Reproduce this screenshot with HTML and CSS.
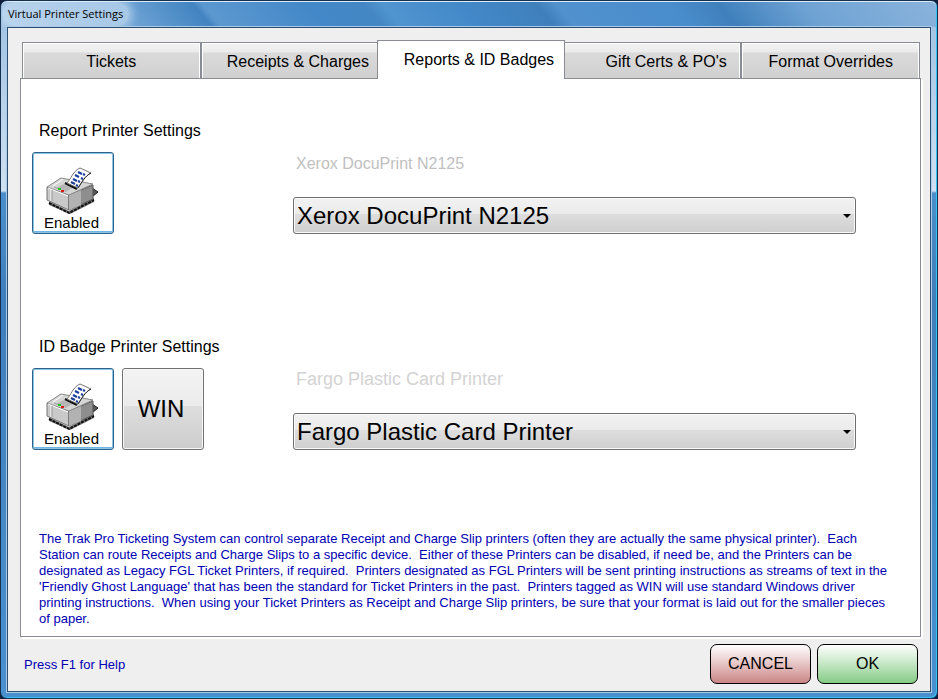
FILE: index.html
```html
<!DOCTYPE html>
<html lang="en">
<head>
<meta charset="UTF-8">
<title>Virtual Printer Settings</title>
<link rel="stylesheet" href="styles.css">
</head>
<body>
<svg width="0" height="0" class="symbols" aria-hidden="true">
  <symbol id="printer" viewBox="0 0 54 48">
    <!-- base -->
    <path d="M3 34 L23 44 L48 31 V35 L24 47 L3 38 Z" fill="#777"/>
    <path d="M3 36 L23 46 L48 33" fill="none" stroke="#111" stroke-width="2" stroke-dasharray="3 1"/>
    <path d="M46 21 L52 25 L46 30 Z" fill="#555" stroke="#222"/>
    <!-- body -->
    <path d="M1 20 L23 28 V43 L1 33 Z" fill="#c9c9c9" stroke="#777"/>
    <path d="M23 28 L47 18 V32 L23 43 Z" fill="#8e8e8e" stroke="#555"/>
    <path d="M23 28 L35 23 V38 L23 43 Z" fill="#b2b2b2"/>
    <path d="M1 20 L15 11 L47 17 L23 28 Z" fill="#d6d6d6" stroke="#888"/>
    <path d="M5 22 V34 M7 19 L17 12 M2 21 L22 29" fill="none" stroke="#fff"/>
    <path d="M6 23 V34 M8 20 L18 24" fill="none" stroke="#999"/>
    <path d="M10 21 L18 17 L28 20 L20 25 Z" fill="#b5b5b5"/>
    <path d="M19 16 L31 22" stroke="#111" stroke-width="2"/>
    <!-- paper -->
    <path d="M21 16 C25 12 27 4 34 1 L45 6 C39 9 36 15 32 21 Z" fill="#fff" stroke="#777"/>
    <path d="M45 6 C39 9 36 15 32 21" fill="none" stroke="#222"/>
    <path d="M32 5 L36 7 M37 7 L39 8 M29 8 L33 10 M35 11 L37 12 M27 12 L31 14 M32 14 L34 15 M25 15 L29 17 M30 18 L32 19" stroke="#1a3c9c" stroke-width="2"/>
    <rect x="12" y="21" width="3" height="2" fill="#18c818"/>
    <rect x="15" y="23" width="3" height="2" fill="#e01818"/>
  </symbol>
</svg>

<div class="window">
  <header class="titlebar"><span class="title">Virtual Printer Settings</span></header>

  <main class="client">
    <div class="tabs" role="tablist">
      <button class="tab" role="tab">Tickets</button>
      <button class="tab indent" role="tab">Receipts &amp; Charges</button>
      <button class="tab indent active" role="tab" aria-selected="true">Reports &amp; ID Badges</button>
      <button class="tab indent-more" role="tab">Gift Certs &amp; PO's</button>
      <button class="tab" role="tab">Format Overrides</button>
    </div>

    <div class="panel" role="tabpanel">
      <section class="settings">
        <h2>Report Printer Settings</h2>
        <div class="row">
          <div class="toggles">
            <button class="square enabled"><svg class="icon"><use href="#printer"/></svg>Enabled</button>
          </div>
          <div class="device">
            <label for="report-printer">Xerox DocuPrint N2125</label>
            <div class="combo">
              <select id="report-printer"><option>Xerox DocuPrint N2125</option></select>
            </div>
          </div>
        </div>
      </section>

      <section class="settings">
        <h2>ID Badge Printer Settings</h2>
        <div class="row">
          <div class="toggles">
            <button class="square enabled"><svg class="icon"><use href="#printer"/></svg>Enabled</button>
            <button class="square win">WIN</button>
          </div>
          <div class="device">
            <label class="large" for="badge-printer">Fargo Plastic Card Printer</label>
            <div class="combo">
              <select id="badge-printer"><option>Fargo Plastic Card Printer</option></select>
            </div>
          </div>
        </div>
      </section>

      <p class="info">The Trak Pro Ticketing System can control separate Receipt and Charge Slip printers (often they are actually the same physical printer).&nbsp; Each<br>
      Station can route Receipts and Charge Slips to a specific device.&nbsp; Either of these Printers can be disabled, if need be, and the Printers can be<br>
      designated as Legacy FGL Ticket Printers, if required.&nbsp; Printers designated as FGL Printers will be sent printing instructions as streams of text in the<br>
      'Friendly Ghost Language' that has been the standard for Ticket Printers in the past.&nbsp; Printers tagged as WIN will use standard Windows driver<br>
      printing instructions.&nbsp; When using your Ticket Printers as Receipt and Charge Slip printers, be sure that your format is laid out for the smaller pieces<br>
      of paper.</p>
    </div>

    <footer class="footer">
      <span class="help">Press F1 for Help</span>
      <button class="action cancel">CANCEL</button>
      <button class="action ok">OK</button>
    </footer>
  </main>
</div>
</body>
</html>
```
FILE: styles.css
```css
* { box-sizing: border-box; }
body {
  margin: 0;
  background: #10203c;
  color: #000;
  font-family: "Liberation Sans", Arial, sans-serif;
  font-size: 16px;
}
button, select { font-family: inherit; color: #000; }
.symbols { position: absolute; }

/* window frame */
.window {
  display: flex;
  flex-direction: column;
  min-height: 100vh;
  padding: 0 6px 6px;
  border: 1px solid #16304f;
  border-radius: 7px;
  background: linear-gradient(#9cc0e2, #cfe1f2 190px, #4a8fcb 192px, #3f7fbb 300px, #4a90cf);
  box-shadow: inset -1px -1px #35c3f5, inset 0 1px #dcebf8;
}
.titlebar {
  height: 25px;
  margin: 1px -5px 0;
  overflow: hidden;
  border-radius: 6px 6px 0 0;
  background: linear-gradient(50deg, #9dc0e2 0, #6ea3d5 14%, #4284c1 22%, #5c98d0 23%, #4388c8 34%, #4487c4 40%, #5095d0 42%, #4388c8 50%, #3f80bc 58%, #5091ce 60%, #4a8dcc 72%, #3f80bc 77%, #6fa3d4 86%, #8ab3dc 100%);
}
.title {
  display: inline-block;
  padding: 0 6px;
  font-family: "Open Sans", "Noto Sans", sans-serif;
  font-size: 11px;
  line-height: 24px;
  border-radius: 12px;
  background: rgba(205, 225, 243, 0.6);
  box-shadow: 0 0 8px 4px rgba(205, 225, 243, 0.6);
}
.client {
  display: flex;
  flex-direction: column;
  flex: 1;
  padding: 12px 9px 7px 12px;
  border: 1px solid #2b4d70;
  background: #efefef;
  box-shadow: 0 0 0 1px #a9cbe8;
}

/* tabs */
.tabs {
  display: flex;
  align-items: flex-end;
  padding: 0 1px 0 2px;
}
.tab {
  flex: 1 1 20%;
  height: 36px;
  margin: 0;
  padding: 2px 0 0;
  border: 1px solid #898c95;
  border-bottom: none;
  background: linear-gradient(#f3f3f3, #ebebeb 9px, #dadada 10px, #d0d0d0);
  box-shadow: inset 1px 1px #fff, inset -1px 0 #fff;
  font-size: 16px;
}
.tab.indent { padding-left: 16px; }
.tab.indent-more { padding-left: 28px; }
.tab.active {
  position: relative;
  flex-basis: 21%;
  height: 39px;
  margin: 0 -2px -1px;
  padding-top: 0;
  background: #fff;
  box-shadow: none;
}
.panel {
  display: flex;
  flex-direction: column;
  flex: 1;
  padding: 42px 11px 9px;
  border: 1px solid #898c95;
  background: #fff;
  box-shadow: 2px 2px #fff;
}

/* printer settings */
.settings + .settings { margin-top: 103px; }
.settings h2 {
  margin: 0 0 11px;
  padding-left: 7px;
  font-size: 16px;
  font-weight: normal;
  line-height: 20px;
}
.row {
  display: grid;
  grid-template-columns: 261px 1fr;
  padding-right: 53px;
}
.toggles { display: flex; gap: 8px; }
.square {
  width: 82px;
  height: 82px;
  padding: 0;
  border: 1px solid #707070;
  border-radius: 3px;
  background: linear-gradient(#f3f3f3, #ebebeb 46%, #dddddd 47%, #cdcdcd);
  box-shadow: inset 0 0 0 1px #f8f8f8;
}
.square.win {
  padding-right: 4px;
  font-size: 24px;
}
.square.enabled {
  display: flex;
  flex-direction: column;
  align-items: center;
  justify-content: flex-end;
  padding-right: 3px;
  padding-bottom: 2px;
  border-color: #2c628b;
  background: #fff;
  box-shadow: inset 0 0 0 1px #8cc4e6, inset 0 -2px #6db5e2;
  font-size: 15px;
  line-height: 16px;
}
.icon { width: 54px; height: 48px; margin-left: 2px; }
.device {
  display: flex;
  flex-direction: column;
  justify-content: space-between;
  padding-top: 3px;
}
.device label {
  padding-left: 3px;
  color: #c0c0c0;
  line-height: 18px;
}
.device label.large {
  color: #d3d3d3;
  font-size: 18px;
  line-height: 16px;
}
.combo { position: relative; }
.combo::after {
  content: "";
  position: absolute;
  right: 5px;
  top: 17px;
  border: 4px solid transparent;
  border-top-color: #000;
  border-bottom: none;
  pointer-events: none;
}
.combo select {
  display: block;
  appearance: none;
  width: 100%;
  height: 37px;
  padding: 0 20px 0 3px;
  border: 1px solid #707070;
  border-radius: 3px;
  background: linear-gradient(#f2f2f2, #ebebeb 46%, #dddddd 47%, #cfcfcf);
  box-shadow: inset 0 0 0 1px #fafafa;
  font-size: 24px;
}

.info {
  margin: auto 0 0;
  padding-left: 7px;
  color: #0000b4;
  font-size: 13px;
  line-height: 16px;
  white-space: nowrap;
}

/* bottom bar */
.footer {
  display: flex;
  align-items: center;
  gap: 6px;
  padding: 7px 3px 0 4px;
}
.help {
  margin-right: auto;
  color: #0000b4;
  font-size: 13px;
}
.action {
  width: 101px;
  height: 40px;
  padding: 0;
  border: 1px solid #000;
  border-radius: 7px;
  font-size: 16px;
}
.cancel { background: linear-gradient(#fff, #e6c4c4 50%, #cb8585); }
.ok { background: linear-gradient(#fff, #c4e6c4 50%, #85cb85); }
```
